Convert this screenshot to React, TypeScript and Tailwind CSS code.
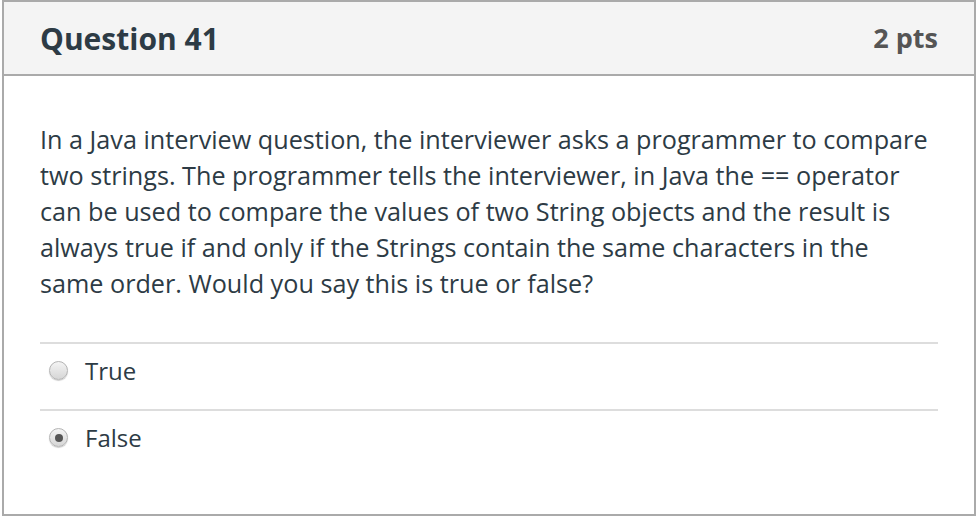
import React, { useState } from 'react';

const answers = ['True', 'False'];

function Radio({ checked }: { checked: boolean }) {
  return (
    <span className="relative flex h-[19px] w-[19px] shrink-0 items-center justify-center rounded-full border border-[#b4b4b4] bg-gradient-to-b from-[#f4f4f4] to-[#d6d6d6] shadow-[0_1px_1px_rgba(0,0,0,0.2)]">
      {checked && <span className="h-[8px] w-[8px] rounded-full bg-[#555]" />}
    </span>
  );
}

export default function App() {
  const [selected, setSelected] = useState('False');

  return (
    <div className="h-[516px] w-[976px] bg-white pl-[2px] font-['Open_Sans',sans-serif]">
      <div className="flex h-full flex-col border-2 border-[#aaaaaa] bg-white">
        {/* Header */}
        <div className="flex h-[74px] shrink-0 items-center justify-between border-b-2 border-[#aaaaaa] bg-[#f4f4f4] pl-[36px] pr-[36px]">
          <h2 className="text-[30px] font-bold text-[#2d3b45]">Question 41</h2>
          <span className="text-[27px] font-bold text-[#555555]">2 pts</span>
        </div>

        {/* Body */}
        <div className="px-[36px] pt-[45px]">
          <p className="max-w-[893px] text-[25.2px] leading-[36px] text-[#2d3b45]">
            In a Java interview question, the interviewer asks a programmer to compare two strings. The programmer
            tells the interviewer, in Java the == operator can be used to compare the values of two String objects and
            the result is always true if and only if the Strings contain the same characters in the same order. Would
            you say this is true or false?
          </p>

          <div className="mt-[41px]">
            {answers.map((a) => (
              <label
                key={a}
                className="flex h-[67px] cursor-pointer items-center gap-[17px] border-t-2 border-[#dddddd] pb-[12px] pl-[9px]"
                onClick={() => setSelected(a)}
              >
                <Radio checked={selected === a} />
                <span className="text-[24px] text-[#2d3b45]">{a}</span>
              </label>
            ))}
          </div>
        </div>
      </div>
    </div>
  );
}
